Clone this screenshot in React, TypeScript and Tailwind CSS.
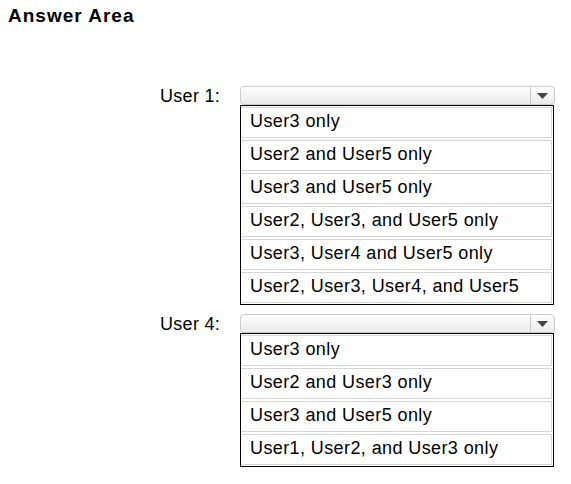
import React from "react";

type Group = { label: string; options: string[] };

const groups: Group[] = [
  {
    label: "User 1:",
    options: [
      "User3 only",
      "User2 and User5 only",
      "User3 and User5 only",
      "User2, User3, and User5 only",
      "User3, User4 and User5 only",
      "User2, User3, User4, and User5",
    ],
  },
  {
    label: "User 4:",
    options: [
      "User3 only",
      "User2 and User3 only",
      "User3 and User5 only",
      "User1, User2, and User3 only",
    ],
  },
];

function Caret() {
  return (
    <svg width="11" height="6" viewBox="0 0 11 6" aria-hidden="true">
      <path d="M0 0 H11 L5.5 6 Z" fill="#444444" />
    </svg>
  );
}

function Picker({ group }: { group: Group }) {
  return (
    <div className="flex">
      <div className="w-[80px] h-[19px] flex items-center text-[18px] tracking-[0.3px] leading-none text-black">
        {group.label}
      </div>
      <div className="w-[315px] flex flex-col">
        <div className="h-[19px] flex rounded-[4px] border border-[#cccccc] bg-gradient-to-b from-[#fdfdfd] to-[#ebebeb]">
          <div className="flex-1" />
          <div className="w-[24px] flex items-center justify-center border-l border-[#cccccc]">
            <Caret />
          </div>
        </div>
        <div className="w-[314px] border border-black bg-white flex flex-col">
          {group.options.map((opt) => (
            <div key={opt} className="h-[33px] py-px pr-px">
              <div className="h-full border border-l-0 border-[#d6d6d6] flex items-center pl-[9px] pb-[3px] text-[18px] tracking-[0.4px] leading-none text-black whitespace-nowrap">
                {opt}
              </div>
            </div>
          ))}
        </div>
      </div>
    </div>
  );
}

export default function App() {
  return (
    <div
      className="w-[571px] h-[484px] bg-white pl-[8px] pt-[6px]"
      style={{ fontFamily: '"Liberation Sans", Arial, sans-serif' }}
    >
      <h1 className="text-[19px] font-bold tracking-[1px] leading-[20px] text-black">Answer Area</h1>
      <div className="mt-[60px] pl-[152px] flex flex-col gap-[9px]">
        {groups.map((g) => (
          <Picker key={g.label} group={g} />
        ))}
      </div>
    </div>
  );
}
